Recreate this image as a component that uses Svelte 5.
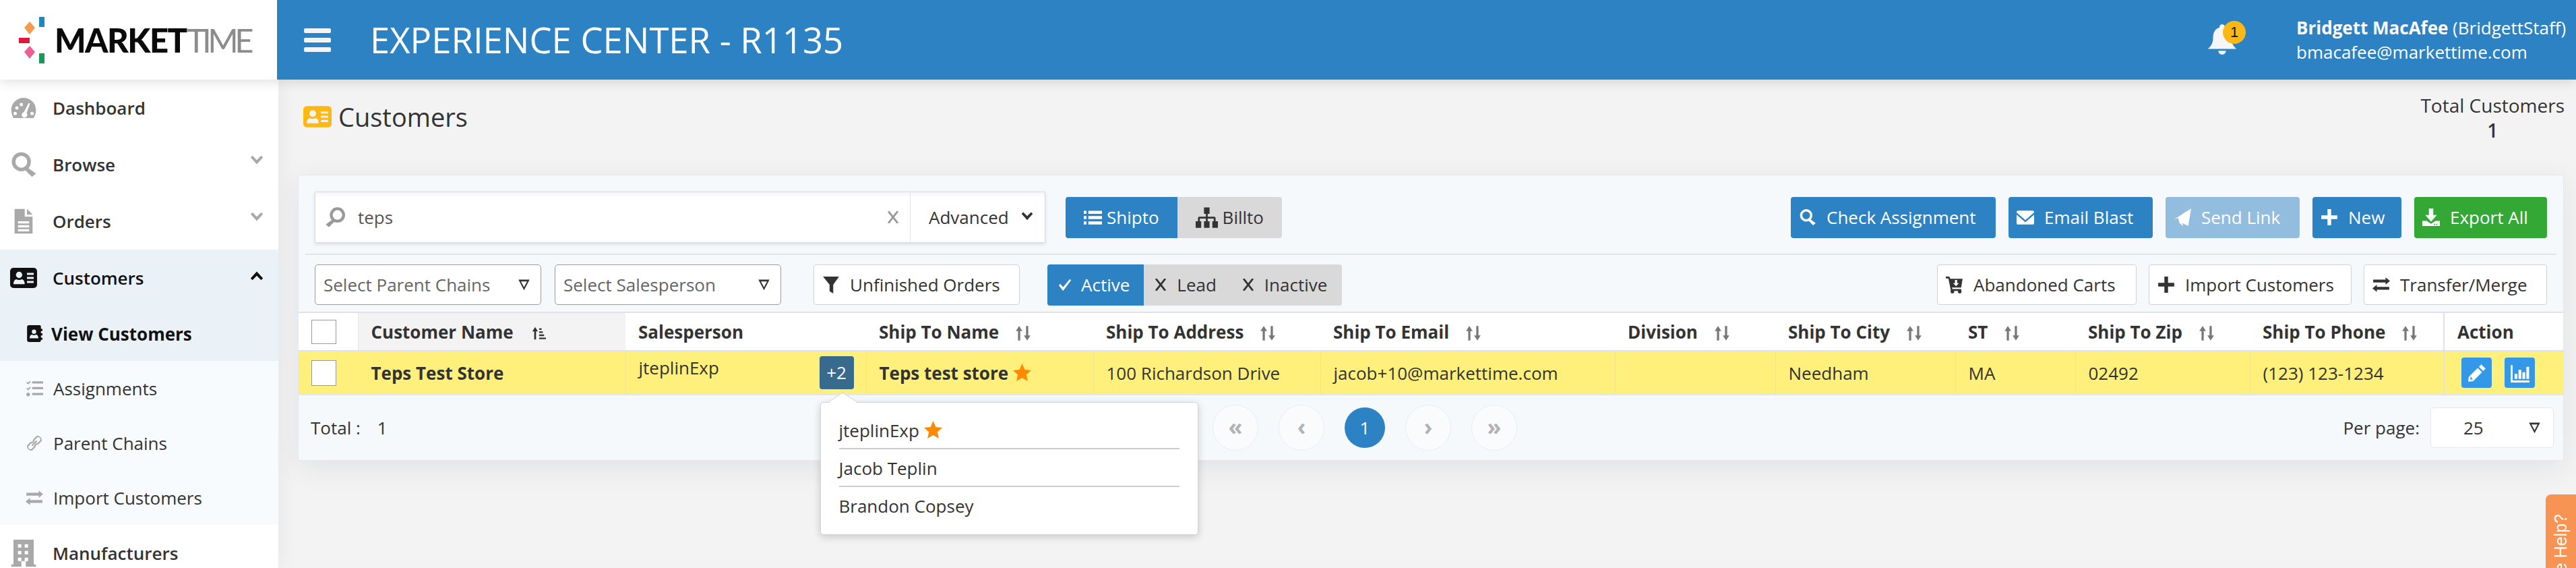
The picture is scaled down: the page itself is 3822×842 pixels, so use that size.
<script>
    const icons = {
        gauge: ['M12 3a11 11 0 0 0-11 11c0 2.700.9 5 2 7h18c1.100-2 2-4.300 2-7A11 11 0 0 0 12 3zm-6 7.500a1.500 1.500 0 1 1 0 3 1.500 1.500 0 0 1 0-3zm4-3a1.500 1.500 0 1 1 0 3 1.500 1.500 0 0 1 0-3zm6.500 0l1.200.6-3 8.400a2.500 2.500 0 1 1-2.400-.8zM4.500 15.500a1.500 1.500 0 1 1 0 3 1.500 1.500 0 0 1 0-3zm15 0a1.500 1.500 0 1 1 0 3 1.500 1.500 0 0 1 0-3z'],
        search: ['M10 1a8.500 8.500 0 1 0 0 17 8.500 8.500 0 0 0 0-17zm0 3.200a5.300 5.300 0 1 1 0 10.600 5.300 5.300 0 0 1 0-10.600z', 'M15.500 14.500l-2 2.500 6 6 3.500-3z'],
        file: ['M4 1h9v7h7v15H4zm11 0l5 5h-5zM7 12v2h10v-2zm0 3.500v2h10v-2zM7 19v2h10v-2z'],
        card: ['M3 3h18a3 3 0 0 1 3 3v12a3 3 0 0 1-3 3H3a3 3 0 0 1-3-3V6a3 3 0 0 1 3-3zm5 3.500a2.800 2.800 0 1 0 0 5.600 2.800 2.800 0 0 0 0-5.600zM3 17.500h10c0-2.500-1-4-2.500-4.300-1.500.8-3.500.8-5 0C4 13.500 3 15 3 17.500zM15 7.500v1.800h6V7.500zm0 3.600v1.800h6v-1.800zm0 3.600v1.800h6v-1.800z'],
        book: ['M5 0h14a2 2 0 0 1 2 2v3h2v3h-2v3h2v3h-2v3h2v3h-2v1a2 2 0 0 1-2 2H5a3 3 0 0 1-3-3V3a3 3 0 0 1 3-3zm6.500 6a3 3 0 1 0 0 6 3 3 0 0 0 0-6zM5.500 18h12c0-3-1.500-5-3-5-1.800 1-4.200 1-6 0-1.500 0-3 2-3 5z'],
        tasks: ['M1 4l1.200-1.200L3.500 4 6 1.500 7.200 2.700 3.500 6.500zM1 12l1.200-1.200L3.500 12 6 9.500l1.200 1.200-3.700 3.800zM3.500 17.500a2.500 2.500 0 1 1 0 5 2.500 2.500 0 0 1 0-5zM9 2h15v3H9zm0 8h15v3H9zm0 8h15v3H9z'],
        link: ['M15 2a6 6 0 0 1 7 7l-3.500 3.500a6 6 0 0 1-6 1.500l2-2a3 3 0 0 0 2.500-1l3-3a3 3 0 0 0-4-4l-3 3a3 3 0 0 0-1 2.500l-2 2a6 6 0 0 1 1.500-6z', 'M9 22a6 6 0 0 1-7-7l3.500-3.500a6 6 0 0 1 6-1.500l-2 2a3 3 0 0 0-2.500 1l-3 3a3 3 0 0 0 4 4l3-3a3 3 0 0 0 1-2.500l2-2a6 6 0 0 1-1.500 6z', 'M8 14.500l6.500-6.500 1.500 1.500-6.500 6.500z'],
        exchange: ['M24 7l-6-5v3H1v4h17v3zM0 17l6-5v3h17v4H6v3z'],
        building: ['M3 0h18v22h2v2H1v-2h2zm4 4v3h3V4zm6 0v3h3V4zM7 10v3h3v-3zm6 0v3h3v-3zM7 16v3h3v-3zm6 0v3h3v-3zm-3 3v5h4v-5z'],
        bars: ['M0 3h3.500v4H0zm6 0h18v4H6zM0 10h3.500v4H0zm6 0h18v4H6zM0 17h3.500v4H0zm6 0h18v4H6z'],
        sitemap: ['M9 1h6v7h-2v3h7a1.500 1.500 0 0 1 1.500 1.500V16H24v7h-6v-7h1.500v-3H13v3h2v7H9v-7h2v-3H4.500v3H6v7H0v-7h2.500v-3.500A1.500 1.500 0 0 1 4 11h7V8H9z'],
        filter: ['M1 1h22L15 12v12l-5-3v-9z'],
        check: ['M2 13l2.500-2.500L9 16 20 3l2 2L9 22z'],
        cross: ['M3 3l3-1 6 7.500L18 2l3 1-7 9 7 9-3 1-6-7.500L6 22l-3-1 7-9z'],
        mail: ['M2 3h20a2 2 0 0 1 2 2v.5L12 16 0 5.500V5a2 2 0 0 1 2-2z', 'M0 8.500l12 10.500 12-10.500V20a2 2 0 0 1-2 2H2a2 2 0 0 1-2-2z'],
        plane: ['M24 0L20 24l-8-4 1 4-5-4-2-8z', 'M0 15l7-4 12-8-10 9z'],
        plus: ['M9.500 1h5v8.500H23v5h-8.500V23h-5v-8.500H1v-5h8.500z'],
        download: ['M9 0h6v9h5l-8 9-8-9h5z', 'M0 17h6l6 4 6-4h6v7H0zm16 4v1.500h1.500V21zm3 0v1.500h1.500V21z'],
        cart: ['M0 1h5l1 3h17l-2 12H8.500l.5 2h12v2.500H7L3.500 3.500H0zM12.500 5.500V10H10l4 4 4-4h-2.500V5.500z', 'M9 19a2.500 2.500 0 1 1 0 5 2.500 2.500 0 0 1 0-5zM19 19a2.500 2.500 0 1 1 0 5 2.500 2.500 0 0 1 0-5z'],
        pencil: ['M17.500 1L23 6.500l-3 3L14.500 4zM13 5.500L18.500 11 7 22.500 1 23l.5-6zM4 16.500l-.5 4 4-.5L5.500 19 5 17z'],
        chart: ['M0 2h2.500v19.500H24V24H0zM5 13h3.500v6.500H5zm5-5h3.500v11.500H10zm5 3h3.500v8.500H15zm5-7h3.500v15.500H20z'],
        bell: ['M12 0a2 2 0 0 1 2 2.500c3.500 1 5 4 5 7.500 0 5 2 7 4 9H1c2-2 4-4 4-9 0-3.500 1.500-6.500 5-7.500A2 2 0 0 1 12 0z', 'M9 20.500h6a3 3 0 0 1-6 0z'],
        star: ['M12 0l3.500 8 8.500.8-6.400 5.800 1.900 8.400-7.500-4.400L4.500 23l1.900-8.400L0 8.800 8.500 8z'],
        chevdown: ['M2 6l3-3 7 7 7-7 3 3-10 11z'],
        chevup: ['M2 18l3 3 7-7 7 7 3-3L12 7z'],
        caret: ['M1 2h22L12 23zm5 3.500L12 17l6-11.500z'],
        sort: ['M6.500 2L11 9H8v13H5V9H2z', 'M16 2h3v13h3l-4.500 7-4.500-7h3z'],
        sortasc: ['M6.500 2L11 9H8v13H5V9H2z', 'M13 4h4v2.500h-4zm0 5h6v2.500h-6zm0 5h8v2.500h-8zm0 5h11v2.500H13z']
    };

    const nav = [
        { label: 'Dashboard', icon: 'gauge' },
        { label: 'Browse', icon: 'search', chevron: 'chevdown' },
        { label: 'Orders', icon: 'file', chevron: 'chevdown' }
    ];
    const subnav = [
        { label: 'Assignments', icon: 'tasks' },
        { label: 'Parent Chains', icon: 'link' },
        { label: 'Import Customers', icon: 'exchange' }
    ];
    const cols = [
        { title: 'Customer Name', width: 397, sort: 'sortasc' },
        { title: 'Salesperson', width: 357 },
        { title: 'Ship To Name', width: 337, sort: 'sort' },
        { title: 'Ship To Address', width: 337, sort: 'sort' },
        { title: 'Ship To Email', width: 437, sort: 'sort' },
        { title: 'Division', width: 238, sort: 'sort' },
        { title: 'Ship To City', width: 267, sort: 'sort' },
        { title: 'ST', width: 178, sort: 'sort' },
        { title: 'Ship To Zip', width: 259, sort: 'sort' },
        { title: 'Ship To Phone', width: 288, sort: 'sort' },
        { title: 'Action', width: 177 }
    ];
    const actions = [
        { label: 'Check Assignment', icon: 'search' },
        { label: 'Email Blast', icon: 'mail' },
        { label: 'Send Link', icon: 'plane', faded: true },
        { label: 'New', icon: 'plus' },
        { label: 'Export All', icon: 'download', green: true }
    ];
    const tools = [
        { label: 'Abandoned Carts', icon: 'cart' },
        { label: 'Import Customers', icon: 'plus' },
        { label: 'Transfer/Merge', icon: 'exchange' }
    ];
    const pages = ['«', '‹', '1', '›', '»'];
</script>

{#snippet icon(name, cls = '')}
    <svg class="icon {cls}" viewBox="0 0 24 24" aria-hidden="true">
        {#each icons[name] as d}
            <path {d} fill-rule="evenodd" />
        {/each}
    </svg>
{/snippet}

<div class="shell">
    <!-- TOP BAR -->
    <header class="topbar">
        <div class="logo">
            <svg class="logo-mark" viewBox="0 0 38 69" aria-hidden="true">
                <rect x="30" y="0" width="8" height="15" fill="#1f86c6" />
                <path d="M16 7l8 9-8 10-8-10z" fill="#f79a4d" />
                <rect x="0" y="31" width="16" height="8" fill="#e3163a" />
                <path d="M16 43l8 9-8 10-8-10z" fill="#ec5f93" />
                <rect x="30" y="54" width="8" height="15" fill="#159a57" />
            </svg>
            <span class="wordmark"><b>MARKET</b><span>TIME</span></span>
        </div>
        <div class="bar">
            <div class="burger"><i></i><i></i><i></i></div>
            <div class="app-title">EXPERIENCE CENTER - R1135</div>
            <div class="bell">
                {@render icon('bell')}
                <span class="bell-count">1</span>
            </div>
            <div class="user">
                <div><b>Bridgett MacAfee</b> (BridgettStaff)</div>
                <div>bmacafee@markettime.com</div>
            </div>
        </div>
    </header>

    <div class="body">
        <!-- SIDEBAR -->
        <nav class="sidebar">
            {#each nav as item}
                <div class="nav-item">
                    {@render icon(item.icon, 'nav-icon')}
                    <span>{item.label}</span>
                    {#if item.chevron}{@render icon(item.chevron, 'nav-chev')}{/if}
                </div>
            {/each}
            <div class="group">
                <div class="nav-item current">
                    {@render icon('card', 'nav-icon')}
                    <span>Customers</span>
                    {@render icon('chevup', 'nav-chev')}
                </div>
                <div class="sub-item current">
                    {@render icon('book', 'sub-icon')}
                    <span>View Customers</span>
                </div>
            </div>
            <div class="subs">
                {#each subnav as item}
                    <div class="sub-item">
                        {@render icon(item.icon, 'sub-icon')}
                        <span>{item.label}</span>
                    </div>
                {/each}
            </div>
            <div class="nav-item">
                {@render icon('building', 'nav-icon')}
                <span>Manufacturers</span>
            </div>
        </nav>

        <!-- CONTENT -->
        <main class="main">
            <div class="page-head">
                <h1>{@render icon('card', 'head-icon')}Customers</h1>
                <div class="total-customers">
                    <div>Total Customers</div>
                    <div class="total-num">1</div>
                </div>
            </div>

            <section class="panel">
                <div class="row-search">
                    <div class="search">
                        {@render icon('search', 'search-glass')}
                        <span class="search-text">teps</span>
                        {@render icon('cross', 'search-x')}
                        <div class="advanced">Advanced {@render icon('chevdown', 'adv-chev')}</div>
                    </div>
                    <div class="toggle">
                        <div class="seg on">{@render icon('bars')}Shipto</div>
                        <div class="seg">{@render icon('sitemap', 'wide')}Billto</div>
                    </div>
                    <div class="actions main-actions">
                        {#each actions as a}
                            <div class="btn" class:faded={a.faded} class:green={a.green}>{@render icon(a.icon)}{a.label}</div>
                        {/each}
                    </div>
                </div>

                <div class="row-filter">
                    <div class="dropdown">Select Parent Chains {@render icon('caret')}</div>
                    <div class="dropdown">Select Salesperson {@render icon('caret')}</div>
                    <div class="btn plain unfinished">{@render icon('filter')}Unfinished Orders</div>
                    <div class="status">
                        <div class="st on">{@render icon('check')}Active</div>
                        <div class="st">{@render icon('cross')}Lead</div>
                        <div class="st">{@render icon('cross')}Inactive</div>
                    </div>
                    <div class="actions tools">
                        {#each tools as t}
                            <div class="btn plain">{@render icon(t.icon)}{t.label}</div>
                        {/each}
                    </div>
                </div>

                <table>
                    <colgroup>
                        <col style="width:88px" />
                        {#each cols as c}<col style="width:{c.width}px" />{/each}
                    </colgroup>
                    <thead>
                        <tr>
                            <th class="chk"><span class="box"></span></th>
                            {#each cols as c, i}
                                <th class:sorted={i === 0} class:act={c.title === 'Action'}>
                                    {c.title}{#if c.sort}{@render icon(c.sort, i === 0 ? 'sort dark' : 'sort')}{/if}
                                </th>
                            {/each}
                        </tr>
                    </thead>
                    <tbody>
                        <tr>
                            <td class="chk"><span class="box tall"></span></td>
                            <td class="strong">Teps Test Store</td>
                            <td>
                                <div class="sales">
                                    <span>jteplinExp</span>
                                    <span class="more">+2</span>
                                    <div class="popup">
                                        <div class="pop-row">jteplinExp {@render icon('star', 'star')}</div>
                                        <div class="pop-row">Jacob Teplin</div>
                                        <div class="pop-row">Brandon Copsey</div>
                                    </div>
                                </div>
                            </td>
                            <td class="strong">Teps test store {@render icon('star', 'star')}</td>
                            <td>100 Richardson Drive</td>
                            <td>jacob+10@markettime.com</td>
                            <td></td>
                            <td>Needham</td>
                            <td>MA</td>
                            <td>02492</td>
                            <td>(123) 123-1234</td>
                            <td class="act">
                                <div class="row-actions">
                                    <span class="mini">{@render icon('pencil')}</span>
                                    <span class="mini">{@render icon('chart')}</span>
                                </div>
                            </td>
                        </tr>
                    </tbody>
                </table>

                <div class="foot">
                    <div class="total">Total :<span>1</span></div>
                    <div class="pager">
                        {#each pages as p}
                            <span class="page" class:on={p === '1'}>{p}</span>
                        {/each}
                    </div>
                    <div class="per-page">
                        Per page:
                        <div class="per-select">25 {@render icon('caret')}</div>
                    </div>
                </div>
            </section>
        </main>
    </div>

    <div class="help"><span>Have Help?</span></div>
</div>

<style>
    :global(body) {
        margin: 0;
        background: #f3f3f3;
    }

    .shell {
        position: relative;
        width: 3822px;
        height: 842px;
        overflow: hidden;
        font-family: "Open Sans", sans-serif;
        font-size: 26px;
        line-height: 36px;
        color: #333;
    }

    .icon {
        width: 24px;
        height: 24px;
        fill: currentColor;
        flex: none;
    }

    /** TOP BAR */
    .topbar {
        position: relative;
        z-index: 3;
        display: flex;
        height: 118px;
        box-shadow: 0 4px 16px rgba(0, 0, 0, 0.12);
    }
    .logo {
        width: 411px;
        background: #fff;
        display: flex;
        align-items: center;
        padding-left: 28px;
        box-sizing: border-box;
    }
    .logo-mark {
        width: 38px;
        height: 69px;
        margin-right: 15px;
    }
    .wordmark {
        font-family: Lato, sans-serif;
        font-size: 49px;
        line-height: 50px;
        color: #8c8c8c;
        white-space: nowrap;
    }
    .wordmark b {
        color: #0a0a0a;
        font-weight: 900;
        letter-spacing: -1.5px;
    }
    .wordmark span {
        letter-spacing: -5.5px;
    }
    .bar {
        flex: 1;
        background: #2d82c3;
        color: #fff;
        display: flex;
        align-items: center;
        padding-left: 40px;
    }
    .burger {
        display: flex;
        flex-direction: column;
        gap: 7px;
        width: 40px;
    }
    .burger i {
        display: block;
        height: 7px;
        border-radius: 2px;
        background: #f2f5f8;
    }
    .app-title {
        font-size: 52.6px;
        line-height: 60px;
        margin-left: 58px;
    }
    .bell {
        position: relative;
        margin-left: auto;
        width: 56px;
        height: 46px;
        color: #f4f6f8;
        left: -2px;
    }
    .bell :global(.icon) {
        width: 46px;
        height: 46px;
    }
    .bell-count {
        position: absolute;
        left: 24px;
        top: -5px;
        width: 34px;
        height: 34px;
        border-radius: 50%;
        background: #fdb813;
        color: #111;
        font-family: "Liberation Sans", sans-serif;
        font-size: 22px;
        line-height: 34px;
        text-align: center;
    }
    .user {
        margin-left: 75px;
        width: 415px;
        font-size: 26px;
        line-height: 36px;
    }
    .user b {
        font-weight: 700;
    }

    /** SIDEBAR */
    .body {
        display: flex;
        height: 724px;
    }
    .sidebar {
        position: relative;
        z-index: 2;
        width: 413px;
        flex: none;
        background: #fff;
        box-shadow: 0 0 30px rgba(30, 40, 70, 0.07);
    }
    .nav-item {
        display: flex;
        align-items: center;
        height: 84px;
        padding: 0 20px 0 15px;
        font-weight: 600;
        position: relative;
    }
    .nav-item span {
        position: absolute;
        left: 78px;
    }
    .nav-item.current {
        color: #111;
    }
    .group {
        background: #eaf2f8;
    }
    .group .nav-item span,
    .group .sub-item span {
        color: #111;
    }
    .subs {
        background: #f7fbfd;
    }
    :global(.shell) .sidebar :global(.nav-icon) {
        width: 40px;
        height: 40px;
        color: #a9a9a9;
    }
    .current :global(.nav-icon) {
        color: #111 !important;
    }
    .sidebar :global(.nav-chev) {
        width: 24px;
        height: 22px;
        margin-left: auto;
        margin-top: -10px;
        color: #a9a9a9;
    }
    .current :global(.nav-chev) {
        color: #111;
    }
    .sub-item {
        display: flex;
        align-items: center;
        height: 81px;
        padding-left: 38px;
        gap: 15px;
    }
    .sub-item.current {
        font-weight: 700;
        color: #111;
        gap: 12px;
    }
    .sidebar :global(.sub-icon) {
        width: 26px;
        height: 26px;
        color: #a9a9a9;
    }
    .sub-item.current :global(.sub-icon) {
        color: #111;
    }

    /** CONTENT */
    .main {
        flex: 1;
        min-width: 0;
        padding: 0 18px 0 29px;
    }
    .page-head {
        display: flex;
        justify-content: space-between;
        height: 141px;
    }
    h1 {
        display: flex;
        align-items: center;
        gap: 10px;
        height: 34px;
        margin: 38px 0 0 8px;
        font-size: 38px;
        font-weight: 400;
    }
    h1 :global(.head-icon) {
        width: 42px;
        height: 42px;
        color: #fdb813;
    }
    .total-customers {
        margin-top: 20px;
        margin-right: -1px;
        font-size: 28px;
        line-height: 37px;
        text-align: center;
    }
    .total-num {
        font-weight: 600;
    }

    .panel {
        border: 1px solid #e4e8ee;
        background: #f6f9fc;
        height: 424px;
        box-sizing: border-box;
        box-shadow: 0 10px 40px rgba(30, 40, 70, 0.08);
    }
    .row-search {
        display: flex;
        align-items: center;
        height: 76px;
        margin: 24px 10px 0;
        padding: 0 14px 16px;
        border-bottom: 2px solid #e0e4e9;
        box-sizing: content-box;
    }
    .search {
        display: flex;
        align-items: center;
        width: 1084px;
        height: 76px;
        box-sizing: border-box;
        border: 1px solid #d9dde2;
        background: #fff;
        box-shadow: 0 2px 5px rgba(0, 0, 0, 0.12), inset 0 8px 12px -8px rgba(0, 0, 0, 0.08);
    }
    .search-text {
        margin-left: 17px;
        color: #555;
    }
    .search :global(.search-glass) {
        width: 32px;
        height: 32px;
        margin-left: 14px;
        color: #999;
        transform: scaleX(-1);
    }
    .search :global(.search-x) {
        margin-left: auto;
        width: 24px;
        height: 22px;
        color: #999;
    }
    .advanced {
        display: flex;
        align-items: center;
        justify-content: space-between;
        width: 200px;
        height: 100%;
        margin-left: 13px;
        padding: 0 15px 0 27px;
        box-sizing: border-box;
        border-left: 1px solid #e2e2e2;
    }
    .advanced :global(.adv-chev) {
        width: 22px;
        height: 20px;
    }
    .toggle {
        display: flex;
        margin-left: 30px;
        height: 61px;
        border-radius: 4px;
        overflow: hidden;
    }
    .seg {
        display: flex;
        align-items: center;
        gap: 7px;
        padding: 0 27px;
        background: #d9d9d9;
    }
    .seg :global(.icon) {
        width: 27px;
        height: 27px;
    }
    .seg :global(.icon.wide) {
        width: 33px;
        height: 33px;
    }
    .seg.on {
        background: #2d82c3;
        color: #fff;
    }
    .actions {
        display: flex;
        gap: 19px;
        margin-left: auto;
    }
    .btn {
        display: flex;
        align-items: center;
        gap: 15px;
        height: 61px;
        padding: 0 0 0 12px;
        box-sizing: border-box;
        border-radius: 4px;
        background: #2d82c3;
        color: #fff;
        white-space: nowrap;
    }
    .btn :global(.icon) {
        width: 26px;
        height: 26px;
    }
    .main-actions .btn:nth-child(1) { width: 304px; }
    .main-actions .btn:nth-child(2) { width: 214px; }
    .main-actions .btn:nth-child(3) { width: 199px; }
    .main-actions .btn:nth-child(4) { width: 132px; }
    .main-actions .btn:nth-child(5) { width: 197px; }
    .tools .btn:nth-child(1) { width: 296px; }
    .tools .btn:nth-child(2) { width: 301px; }
    .tools .btn:nth-child(3) { width: 272px; }
    .btn.faded {
        background: #92bddf;
    }
    .btn.green {
        background: #34a835;
    }
    .btn.plain {
        height: 60px;
        background: #fff;
        color: #333;
        border: 1px solid #cfd2d6;
    }

    .row-filter {
        display: flex;
        align-items: center;
        height: 60px;
        margin-top: 14px;
        padding: 0 24px;
    }
    .dropdown {
        display: flex;
        align-items: center;
        justify-content: space-between;
        width: 336px;
        height: 60px;
        margin-right: 20px;
        padding: 0 15px 0 12px;
        box-sizing: border-box;
        border: 1px solid #9b9b9b;
        border-radius: 5px;
        background: #fff;
        color: #666;
        white-space: nowrap;
    }
    .dropdown :global(.icon) {
        width: 19px;
        height: 18px;
        color: #333;
    }
    .unfinished {
        width: 306px;
        margin-left: 28px;
    }
    .status {
        display: flex;
        margin-left: 41px;
        height: 61px;
        border-radius: 4px;
        overflow: hidden;
        background: #d9d9d9;
    }
    .st {
        display: flex;
        align-items: center;
        gap: 13px;
        padding: 0 22px 0 14px;
    }
    .st.on {
        gap: 11px;
        padding: 0 21px 0 13px;
        background: #2d82c3;
        color: #fff;
    }
    .st :global(.icon) {
        width: 22px;
        height: 22px;
    }
    .st.on :global(.icon) {
        width: 26px;
        height: 22px;
    }
    .tools {
        gap: 18px;
    }

    table {
        width: 3360px;
        margin-top: 10px;
        table-layout: fixed;
        border-collapse: collapse;
        background: #fff;
    }
    th,
    td {
        padding: 0 0 0 19px;
        border: 0;
        text-align: left;
        white-space: nowrap;
    }
    th {
        height: 55px;
        font-weight: 700;
        border-top: 2px solid #dfe3e8;
        border-bottom: 2px solid #dfe3e8;
    }
    th.sorted {
        background: #f3f3f3;
    }
    td {
        height: 63px;
        background: #fff07b;
        border-bottom: 2px solid #e4e6e4;
        border-left: 1px solid #f0e68c;
    }
    th.chk,
    td.chk {
        padding: 0 0 0 19px;
        border-left: 0;
        border-right: 1px solid #e4e6e8;
    }
    th.act,
    td.act {
        border-left: 2px solid #dfe3e8;
    }
    th :global(.sort) {
        width: 26px;
        height: 26px;
        margin-left: 23px;
        vertical-align: -5px;
        color: #777;
    }
    th :global(.sort.dark) {
        width: 22px;
        height: 22px;
        margin-left: 26px;
        vertical-align: -3px;
        color: #333;
    }
    .box {
        display: block;
        width: 37px;
        height: 36px;
        box-sizing: border-box;
        border: 1px solid #999;
        background: #fff;
    }
    .box.tall {
        height: 38px;
    }
    .strong {
        font-weight: 700;
    }
    td :global(.star),
    .pop-row :global(.star) {
        width: 27px;
        height: 27px;
        vertical-align: -3px;
        color: #ff8a00;
    }
    .sales {
        position: relative;
        display: flex;
        justify-content: space-between;
        margin-right: 18px;
        height: 49px;
    }
    .sales > span:first-child {
        margin-top: -1px;
    }
    .more {
        width: 51px;
        height: 49px;
        border-radius: 4px;
        background: #376a8c;
        color: #fff;
        text-align: center;
        line-height: 49px;
    }
    .popup {
        position: absolute;
        z-index: 5;
        left: 269px;
        top: 68px;
        width: 561px;
        height: 197px;
        box-sizing: border-box;
        padding: 13px 27px;
        background: #fff;
        border: 1px solid #d4d4d4;
        border-radius: 5px;
        box-shadow: 0 3px 12px rgba(0, 0, 0, 0.18);
    }
    .popup::before {
        content: '';
        position: absolute;
        left: 20px;
        top: -14px;
        width: 24px;
        height: 24px;
        background: #fff;
        border: 1px solid #d4d4d4;
        border-right: 0;
        border-bottom: 0;
        transform: rotate(45deg) skew(-12deg, -12deg);
    }
    .pop-row {
        position: relative;
        height: 56px;
        box-sizing: border-box;
        line-height: 56px;
        border-bottom: 2px solid #ccc;
    }
    .pop-row:last-child {
        border-bottom: 0;
    }
    .row-actions {
        display: flex;
        gap: 19px;
        padding-left: 6px;
    }
    .mini {
        display: flex;
        align-items: center;
        justify-content: center;
        width: 45px;
        height: 45px;
        border-radius: 4px;
        background: #3498e8;
        color: #fff;
    }
    .mini :global(.icon) {
        width: 28px;
        height: 28px;
    }

    .foot {
        display: flex;
        align-items: center;
        height: 96px;
        padding: 0 14px 0 18px;
    }
    .total {
        width: 1338px;
        flex: none;
    }
    .total span {
        margin-left: 25px;
    }
    .pager {
        display: flex;
        align-items: center;
        gap: 30px;
    }
    .page {
        display: flex;
        align-items: center;
        justify-content: center;
        width: 68px;
        height: 68px;
        box-sizing: border-box;
        padding-bottom: 4px;
        border: 1px solid #ebedf0;
        border-radius: 50%;
        background: #fafbfd;
        color: #b3b3b3;
        font-size: 34px;
        font-weight: 700;
    }
    .page.on {
        width: 60px;
        height: 60px;
        padding: 0;
        border: 0;
        background: #2d82c3;
        color: #fff;
        font-size: 26px;
        font-weight: 400;
    }
    .per-page {
        display: flex;
        align-items: center;
        gap: 16px;
        margin-left: auto;
    }
    .per-select {
        display: flex;
        align-items: center;
        justify-content: space-between;
        width: 183px;
        height: 60px;
        padding: 0 18px 0 48px;
        box-sizing: border-box;
        background: #fff;
        border: 1px solid #e6e8eb;
        border-radius: 5px;
    }
    .per-select :global(.icon) {
        width: 19px;
        height: 18px;
    }

    /** HELP TAB */
    .help {
        position: absolute;
        right: 0;
        top: 733px;
        width: 45px;
        height: 200px;
        border-radius: 8px 0 0 0;
        background: #f79454;
        color: #fff;
        font-family: "Liberation Sans", sans-serif;
        font-size: 25px;
        z-index: 6;
    }
    .help span {
        position: absolute;
        left: 4px;
        bottom: 40px;
        white-space: nowrap;
        writing-mode: vertical-rl;
        transform: rotate(180deg);
    }
</style>
